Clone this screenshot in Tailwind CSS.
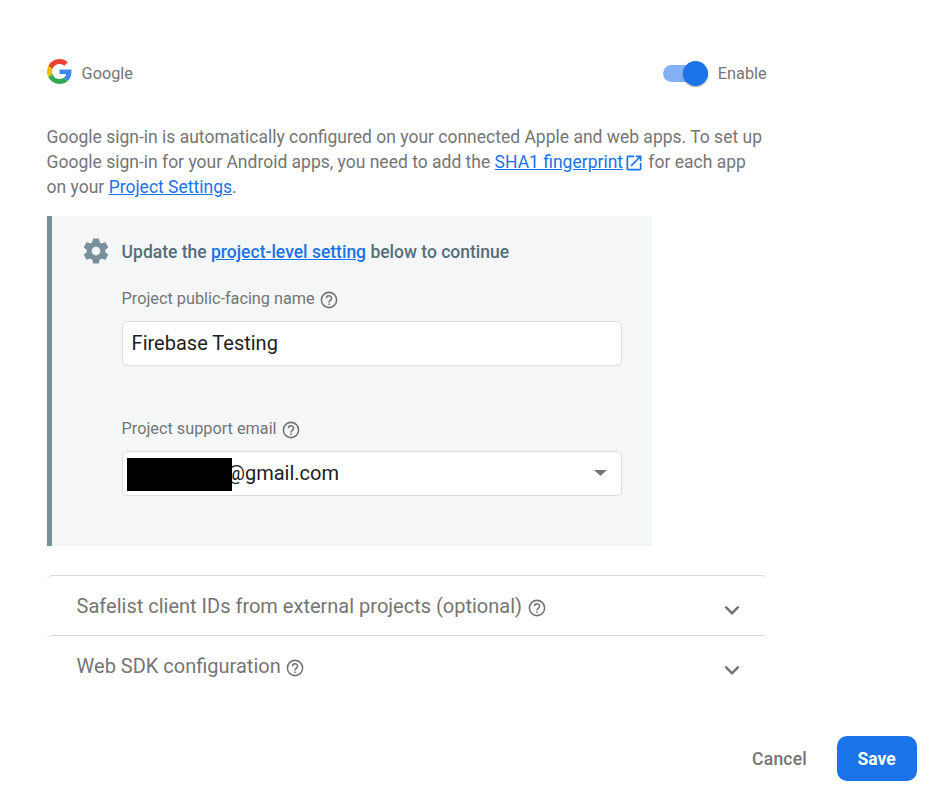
<!DOCTYPE html>
<html lang="en">
<head>
<meta charset="utf-8">
<title>Google sign-in provider</title>
<script src="https://cdn.jsdelivr.net/npm/@tailwindcss/browser@4"></script>
</head>
<body class="bg-white font-['Roboto',sans-serif] text-[#757575]">
<svg class="hidden">
  <symbol id="help" viewBox="0 0 24 24"><g fill="none" stroke="currentColor" stroke-width="1.850"><circle cx="12" cy="12" r="9.150"/><path d="M8.900 10a3.100 3.100 0 1 1 6.200 0c0 2.100-3.100 2.300-3.100 5"/></g><path fill="currentColor" d="M11.100 16.200h1.800V18h-1.800z"/></symbol>
  <symbol id="chevron" viewBox="0 0 24 24"><path fill="currentColor" d="M16.590 8.590L12 13.170 7.410 8.590 6 10l6 6 6-6z"/></symbol>
</svg>
<main class="flex h-[797px] w-[941px] flex-col overflow-hidden pt-[58px] pl-[46.6px]">
  <header class="flex h-[30px] w-[720px] items-center justify-between text-[16.25px]">
    <div class="flex items-center gap-[10px]">
      <svg class="-mt-[3px] size-[25px]" viewBox="0 0 48 48">
        <path fill="#EA4335" d="M24 9.500c3.540 0 6.710 1.220 9.210 3.600l6.850-6.850C35.900 2.380 30.470 0 24 0 14.620 0 6.510 5.380 2.560 13.220l7.980 6.190C12.430 13.720 17.740 9.500 24 9.500z"/>
        <path fill="#4285F4" d="M46.980 24.550c0-1.570-.15-3.090-.38-4.550H24v9.020h12.940c-.58 2.960-2.260 5.480-4.780 7.180l7.730 6c4.510-4.180 7.090-10.360 7.090-17.650z"/>
        <path fill="#FBBC05" d="M10.530 28.590c-.48-1.450-.76-2.990-.76-4.590s.27-3.140.76-4.590l-7.980-6.190C.92 16.460 0 20.120 0 24s.92 7.540 2.560 10.780l7.970-6.190z"/>
        <path fill="#34A853" d="M24 48c6.480 0 11.930-2.130 15.890-5.810l-7.730-6c-2.150 1.450-4.920 2.300-8.160 2.300-6.260 0-11.570-4.220-13.470-9.910l-7.980 6.190C6.510 42.620 14.620 48 24 48z"/>
      </svg>
      <span class="pt-[2px]">Google</span>
    </div>
    <div class="flex items-center gap-[10px]">
      <div class="flex h-[17px] w-[45px] items-center justify-end rounded-full bg-[#83b0f4]">
        <span class="size-[25px] shrink-0 rounded-full bg-[#1a73e8] shadow-[0_1px_2px_rgba(0,0,0,0.35)]"></span>
      </div>
      <span class="pt-[2px]">Enable</span>
    </div>
  </header>

  <p class="mt-[37px] h-[75px] text-[17.5px] leading-[25px] whitespace-nowrap">Google sign-in is automatically configured on your connected Apple and web apps. To set up<br>Google sign-in for your Android apps, you need to add the <a class="text-[#1a73e8] underline">SHA1 fingerprint</a><svg class="ml-[1px] inline size-[20px] text-[#1a73e8]" viewBox="0 0 24 24"><path fill="currentColor" d="M19 19H5V5h7V3H5c-1.110 0-2 .9-2 2v14c0 1.100.89 2 2 2h14c1.100 0 2-.9 2-2v-7h-2v7zM14 3v2h3.590l-9.830 9.830 1.410 1.410L19 6.410V10h2V3h-7z"/></svg> for each app<br>on your <a class="text-[#1a73e8] underline">Project Settings</a>.</p>

  <section class="mt-[16px] flex h-[330px] w-[605px] shrink-0 border-l-[5px] border-[#78909c] bg-[#f5f6f8] pt-[20px] pl-[30px]">
    <svg class="-ml-[0.5px] size-[30px] text-[#78909c]" viewBox="0 0 24 24"><path fill="currentColor" d="M19.430 12.980c.04-.32.07-.64.07-.98s-.03-.66-.07-.98l2.110-1.650c.19-.15.24-.42.12-.64l-2-3.460c-.12-.22-.39-.3-.61-.22l-2.490 1c-.52-.4-1.080-.73-1.690-.98l-.38-2.650C14.460 2.180 14.250 2 14 2h-4c-.25 0-.46.18-.49.42l-.38 2.650c-.61.25-1.170.59-1.690.98l-2.490-1c-.23-.09-.49 0-.61.22l-2 3.460c-.13.22-.07.49.12.64l2.110 1.650c-.04.32-.07.65-.07.98s.03.66.07.98l-2.110 1.650c-.19.15-.24.42-.12.64l2 3.460c.12.22.39.3.61.22l2.490-1c.52.4 1.080.73 1.690.98l.38 2.650c.03.24.24.42.49.42h4c.25 0 .46-.18.49-.42l.38-2.650c.61-.25 1.170-.59 1.690-.98l2.490 1c.23.09.49 0 .61-.22l2-3.460c.12-.22.07-.49-.12-.64l-2.110-1.650zM12 15.500c-1.930 0-3.500-1.570-3.500-3.500s1.570-3.500 3.500-3.500 3.500 1.570 3.500 3.500-1.570 3.500-3.500 3.500z"/></svg>
    <div class="ml-[10.5px] w-[500px]">
      <h2 class="h-[30px] text-[17.5px] leading-[33px] font-medium whitespace-nowrap text-[#546e7a]">Update the <a class="text-[#1a73e8] underline">project-level setting</a> below to continue</h2>
      <label class="mt-[22px] flex h-[20px] items-center gap-[4.5px] text-[16.25px]"><span class="pt-[2px]">Project public-facing name</span> <svg class="mt-[3px] size-[20px]"><use href="#help"/></svg></label>
      <div class="mt-[13px] flex h-[45px] items-center rounded-[5px] border border-[#dcdcdc] bg-white pb-[2px] pl-[9px] text-[20px] text-[#212121]">Firebase Testing</div>
      <label class="mt-[52px] flex h-[20px] items-center gap-[4.5px] text-[16.25px]"><span class="pt-[2px]">Project support email</span> <svg class="mt-[3px] size-[20px]"><use href="#help"/></svg></label>
      <div class="mt-[13px] flex h-[45px] items-center rounded-[5px] border border-[#dcdcdc] bg-white pl-[4px] text-[20px] text-[#212121]">
        <span class="z-10 mt-[2px] h-[33px] w-[105px] bg-black"></span><span class="-ml-[4.6px] pb-[2px]">@gmail.com</span>
        <svg class="mr-[14px] mb-[1px] ml-auto h-[6px] w-[13px]" viewBox="0 0 13 6"><path fill="#757575" d="M0 0h13L6.500 6z"/></svg>
      </div>
    </div>
  </section>

  <section class="mt-[29px] w-[720px] text-[20px]">
    <div class="flex h-[60px] items-center rounded-t-[5px] border-t border-[#dcdcdc] pl-[30px]">
      <span>Safelist client IDs from external projects (optional)</span><svg class="mt-[4px] ml-[4.5px] size-[20px]"><use href="#help"/></svg>
      <svg class="mt-[8px] mr-[20px] ml-auto size-[30px]"><use href="#chevron"/></svg>
    </div>
    <div class="flex h-[60px] items-center rounded-t-[5px] border-t border-[#dcdcdc] pl-[30px]">
      <span>Web SDK configuration</span><svg class="mt-[4px] ml-[4.5px] size-[20px]"><use href="#help"/></svg>
      <svg class="mt-[8px] mr-[20px] ml-auto size-[30px]"><use href="#chevron"/></svg>
    </div>
  </section>

  <footer class="mt-[41px] flex h-[45px] items-center justify-end gap-[30px] pr-[24px] text-[17.5px] font-medium">
    <button class="pt-[2px] tracking-[0.22px]">Cancel</button>
    <button class="h-[45px] w-[80px] rounded-[10px] bg-[#1a73e8] pt-[2px] pr-[1px] font-bold text-white">Save</button>
  </footer>
</main>
</body>
</html>
